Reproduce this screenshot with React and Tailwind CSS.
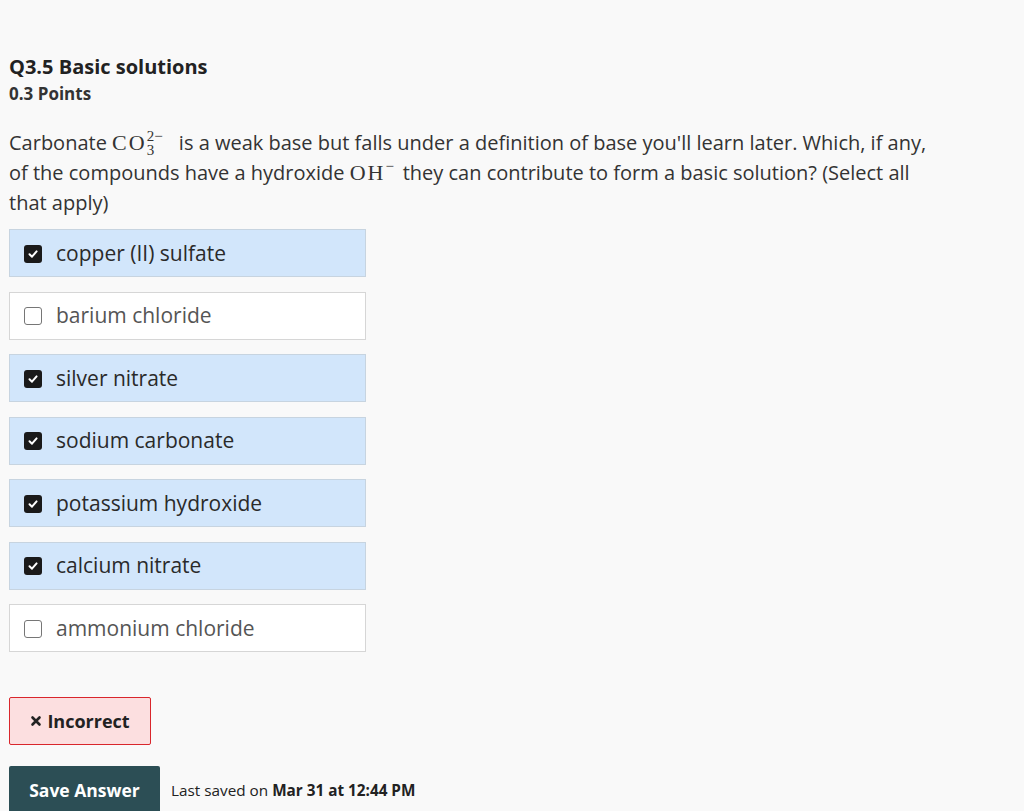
import React from "react";

const OPTIONS = [
  { label: "copper (II) sulfate", checked: true },
  { label: "barium chloride", checked: false },
  { label: "silver nitrate", checked: true },
  { label: "sodium carbonate", checked: true },
  { label: "potassium hydroxide", checked: true },
  { label: "calcium nitrate", checked: true },
  { label: "ammonium chloride", checked: false },
];

const serif = { fontFamily: '"Liberation Serif", "DejaVu Serif", serif' };

const CheckBox = ({ checked }) =>
  checked ? (
    <span className="w-[18px] h-[18px] rounded-[3px] bg-[#1a1a1a] flex items-center justify-center shrink-0">
      <svg viewBox="0 0 12 12" className="w-3 h-3">
        <path d="M2.5 6.3 L5 8.7 L9.6 3.4" fill="none" stroke="white" strokeWidth="2" strokeLinecap="round" strokeLinejoin="round" />
      </svg>
    </span>
  ) : (
    <span className="w-[18px] h-[18px] rounded-[3px] border border-[#767676] bg-white shrink-0" />
  );

// inline math: base letters plus a stacked superscript / subscript
const Chem = ({ base, sup, sub, w }) => (
  <span style={serif} className="text-[22px] leading-none tracking-[2px] whitespace-nowrap">
    {base}
    <span className={`relative inline-block h-[1em] align-baseline tracking-normal ${w}`}>
      {sup && <span className="absolute left-0 top-[1px] text-[15px] leading-none whitespace-nowrap">{sup}</span>}
      {sub && <span className="absolute left-0 top-[15px] text-[15px] leading-none">{sub}</span>}
    </span>
  </span>
);

export default function App() {
  return (
    <div
      className="min-h-screen bg-[#f9f9f9] text-[#333] px-[9px] pt-[54px]"
      style={{ fontFamily: '"Open Sans", "Noto Sans", sans-serif' }}
    >
      <h1 className="text-[20px] font-bold leading-[26px] text-[#222]">Q3.5 Basic solutions</h1>
      <div className="text-[17px] font-bold leading-[22px] mt-[3px] text-[#333]">0.3 Points</div>

      <p className="text-[20px] leading-[30px] mt-[23px] text-[#333] w-[938px]">
        Carbonate <Chem base="CO" sup="2−" sub="3" w="w-[27px]" /> is a weak base but falls under a definition of base
        you'll learn later. Which, if any, of the compounds have a hydroxide{" "}
        <Chem base="OH" sup="−" w="w-[12px]" /> they can contribute to form a basic solution? (Select all that apply)
      </p>

      <div className="flex flex-col gap-[14.5px] mt-[11px] w-[357px]">
        {OPTIONS.map((o) => (
          <div
            key={o.label}
            className={`h-[48px] flex items-center gap-[14px] pl-[14px] pt-[1px] border ${
              o.checked ? "bg-[#d2e6fb] border-[#c7d4e0]" : "bg-white border-[#d6d6d6]"
            }`}
          >
            <CheckBox checked={o.checked} />
            <span className={`text-[21px] ${o.checked ? "text-[#2a2a2a]" : "text-[#555]"}`}>{o.label}</span>
          </div>
        ))}
      </div>

      <div className="mt-[45px] w-[142px] h-[48px] bg-[#fcdfe0] border border-[#d9262c] rounded-[2px] flex items-center justify-center gap-[5px] text-[#222]">
        <svg viewBox="0 0 12 12" className="w-[12px] h-[12px]">
          <path d="M2.5 2.5 L9.5 9.5 M9.5 2.5 L2.5 9.5" stroke="#222" strokeWidth="2.6" strokeLinecap="round" />
        </svg>
        <span className="text-[18px] font-bold">Incorrect</span>
      </div>

      <div className="mt-[21px] flex items-center gap-[11px]">
        <button className="w-[151px] h-[48px] bg-[#2c4e55] text-white text-[17.5px] font-bold rounded-t-[2px]">
          Save Answer
        </button>
        <span className="text-[15.3px] text-[#222]">
          Last saved on <span className="font-bold">Mar 31 at 12:44 PM</span>
        </span>
      </div>
    </div>
  );
}
